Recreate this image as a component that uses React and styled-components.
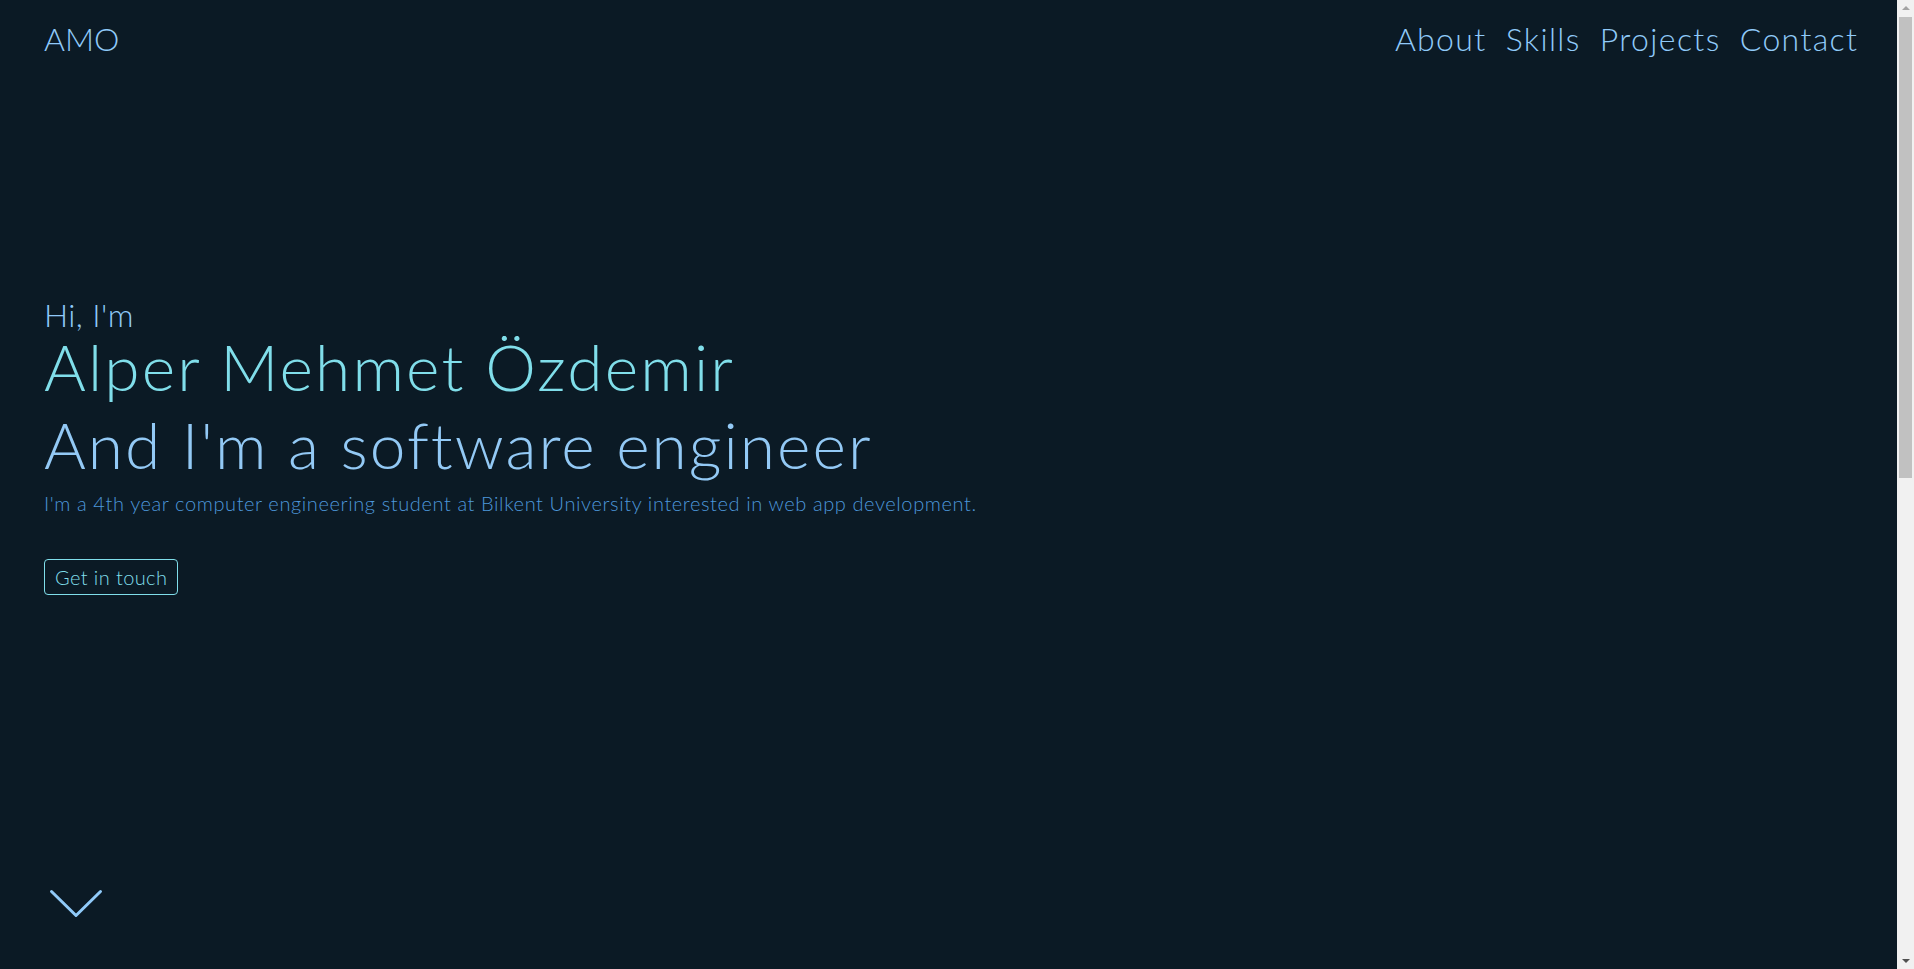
import React from "react";
import styled, { createGlobalStyle } from "styled-components";

const GlobalStyle = createGlobalStyle`
  html, body {
    margin: 0;
    padding: 0;
    background: #0b1a25;
  }
  body {
    font-family: Lato, "Open Sans", sans-serif;
    font-weight: 300;
    letter-spacing: 0.025em;
    color: #90caf9;
  }
  * { box-sizing: border-box; }
`;

const Hero = styled.section`
  min-height: 100vh;
  display: flex;
  flex-direction: column;
  padding: 0 57px 0 44px;
`;

const Header = styled.header`
  display: flex;
  justify-content: space-between;
  align-items: flex-start;
  padding-top: 20px;
`;

const Logo = styled.a`
  font-size: 32px;
  line-height: 38.4px;
  letter-spacing: 0;
  color: #90caf9;
  text-decoration: none;
`;

const Nav = styled.nav`
  display: flex;
  gap: 19px;
`;

const NavLink = styled.a`
  font-size: 32px;
  line-height: 38.4px;
  letter-spacing: 0.043em;
  color: #90caf9;
  text-decoration: none;
  &:last-child {
    margin-right: -1.4px;
  }
`;

const Intro = styled.div`
  display: flex;
  flex-direction: column;
  align-items: flex-start;
  margin-top: 241px;
`;

const Greeting = styled.p`
  margin: 0;
  font-size: 32px;
  line-height: 32px;
  color: #90caf9;
`;

const Name = styled.h1`
  margin: 4px 0 0;
  font-size: 64px;
  line-height: 64px;
  font-weight: 300;
  letter-spacing: 0.034em;
  color: #80deea;
`;

const Role = styled.h2`
  margin: 14px 0 0;
  font-size: 64px;
  line-height: 64px;
  font-weight: 300;
  letter-spacing: 0.032em;
  color: #93c9f5;
`;

const Description = styled.p`
  margin: 14px 0 0;
  font-size: 20px;
  line-height: 24px;
  letter-spacing: 0.03em;
  color: #4d97da;
`;

const ContactButton = styled.a`
  margin-top: 44px;
  display: inline-block;
  padding: 5px 10px;
  font-size: 20px;
  line-height: 24px;
  color: #80deea;
  border: 1px solid #80deea;
  border-radius: 4px;
  text-decoration: none;
`;

const ScrollHint = styled.a`
  margin-top: auto;
  margin-bottom: 49px;
  display: block;
  width: 60px;
  height: 32px;
`;

const Section = styled.section`
  min-height: 996px;
`;

const ScrollTrack = styled.div`
  position: fixed;
  top: 0;
  right: 0;
  width: 17px;
  height: 100vh;
  background: #f1f1f1;
  display: flex;
  flex-direction: column;
  align-items: center;
  justify-content: space-between;
`;

const ScrollThumb = styled.div`
  position: absolute;
  top: 17px;
  left: 2px;
  width: 13px;
  height: 461px;
  background: #c1c1c1;
`;

const Arrow = styled.div`
  width: 0;
  height: 0;
  margin: 6px 0;
  border-left: 4px solid transparent;
  border-right: 4px solid transparent;
  ${(p) =>
    p.$down
      ? "border-top: 4px solid #505050;"
      : "border-bottom: 4px solid #a3a3a3;"}
`;

const Chevron = () => (
  <svg width="60" height="32" viewBox="0 0 60 32" fill="none">
    <polyline
      points="7.5,3.5 32,27.5 56.5,3.5"
      stroke="#90caf9"
      strokeWidth="3"
      strokeLinecap="round"
      strokeLinejoin="round"
    />
  </svg>
);

export default function App() {
  return (
    <>
      <GlobalStyle />
      <Hero>
        <Header>
          <Logo href="#">AMO</Logo>
          <Nav>
            <NavLink href="#about">About</NavLink>
            <NavLink href="#skills">Skills</NavLink>
            <NavLink href="#projects">Projects</NavLink>
            <NavLink href="#contact">Contact</NavLink>
          </Nav>
        </Header>
        <Intro>
          <Greeting>Hi, I'm</Greeting>
          <Name>Alper Mehmet Özdemir</Name>
          <Role>And I'm a software engineer</Role>
          <Description>
            I'm a 4th year computer engineering student at Bilkent University interested in web app development.
          </Description>
          <ContactButton href="#contact">Get in touch</ContactButton>
        </Intro>
        <ScrollHint href="#about">
          <Chevron />
        </ScrollHint>
      </Hero>
      <Section id="about" />
      <ScrollTrack aria-hidden="true">
        <Arrow />
        <ScrollThumb />
        <Arrow $down />
      </ScrollTrack>
    </>
  );
}
